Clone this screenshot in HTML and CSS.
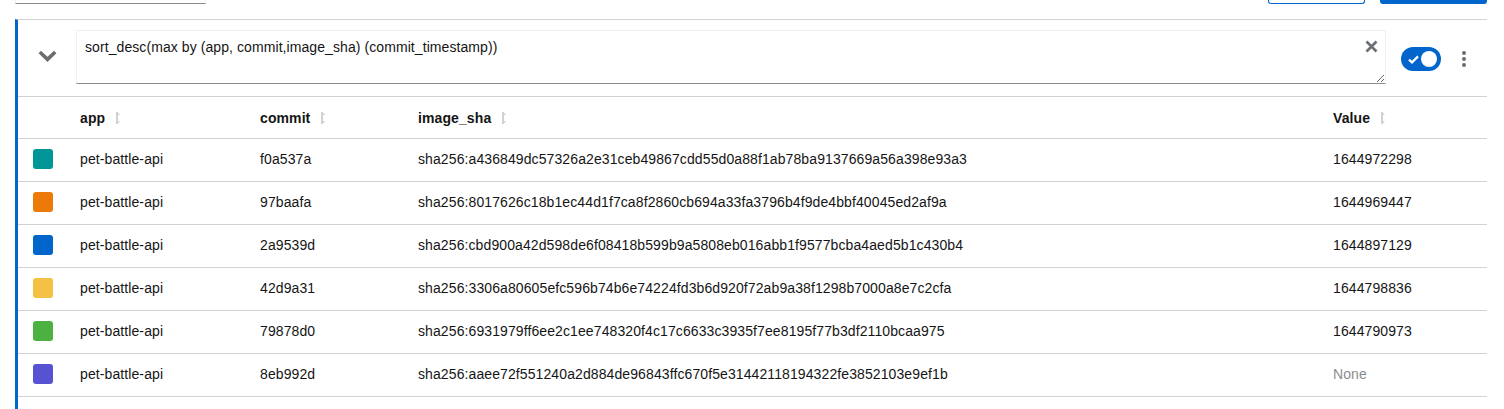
FILE: index.html
```html
<!DOCTYPE html>
<html>
<head>
<meta charset="utf-8">
<link rel="stylesheet" href="styles.css">
</head>
<body>
<div class="topbar">
  <div class="stub-input"></div>
  <div class="spacer"></div>
  <div class="btn-outline"></div>
  <div class="btn-primary"></div>
</div>
<div class="panel">
  <div class="query-row">
    <div class="chevron">
      <svg width="19" height="12" viewBox="0 0 19 12"><path d="M1.8 2 L9.5 9.4 L17.2 2" stroke="#6a6e73" stroke-width="3.6" fill="none" stroke-linejoin="miter"/></svg>
    </div>
    <div class="query-box">
      <textarea class="query-input" spellcheck="false">sort_desc(max by (app, commit,image_sha) (commit_timestamp))</textarea>
      <span class="clear">
        <svg width="13" height="13" viewBox="0 0 13 13"><path d="M1.5 1.5 L11.5 11.5 M11.5 1.5 L1.5 11.5" stroke="#6a6e73" stroke-width="2.6"/></svg>
      </span>
    </div>
    <div class="toggle">
      <svg class="check" width="11" height="9" viewBox="0 0 11 9"><path d="M1 4.6 L4 7.4 L10 1.4" stroke="#fff" stroke-width="2.2" fill="none"/></svg>
      <span class="knob"></span>
    </div>
    <div class="kebab"><span></span><span></span><span></span></div>
  </div>
  <div class="results">
    <div class="row head">
      <div></div>
      <div>app <span class="sort"></span></div>
      <div>commit <span class="sort"></span></div>
      <div>image_sha <span class="sort"></span></div>
      <div>Value <span class="sort"></span></div>
    </div>
    <div class="row"><div><span class="swatch teal"></span></div><div>pet-battle-api</div><div>f0a537a</div><div>sha256:a436849dc57326a2e31ceb49867cdd55d0a88f1ab78ba9137669a56a398e93a3</div><div>1644972298</div></div>
    <div class="row"><div><span class="swatch orange"></span></div><div>pet-battle-api</div><div>97baafa</div><div>sha256:8017626c18b1ec44d1f7ca8f2860cb694a33fa3796b4f9de4bbf40045ed2af9a</div><div>1644969447</div></div>
    <div class="row"><div><span class="swatch blue"></span></div><div>pet-battle-api</div><div>2a9539d</div><div>sha256:cbd900a42d598de6f08418b599b9a5808eb016abb1f9577bcba4aed5b1c430b4</div><div>1644897129</div></div>
    <div class="row"><div><span class="swatch yellow"></span></div><div>pet-battle-api</div><div>42d9a31</div><div>sha256:3306a80605efc596b74b6e74224fd3b6d920f72ab9a38f1298b7000a8e7c2cfa</div><div>1644798836</div></div>
    <div class="row"><div><span class="swatch green"></span></div><div>pet-battle-api</div><div>79878d0</div><div>sha256:6931979ff6ee2c1ee748320f4c17c6633c3935f7ee8195f77b3df2110bcaa975</div><div>1644790973</div></div>
    <div class="row"><div><span class="swatch purple"></span></div><div>pet-battle-api</div><div>8eb992d</div><div>sha256:aaee72f551240a2d884de96843ffc670f5e31442118194322fe3852103e9ef1b</div><div class="none">None</div></div>
  </div>
</div>
</body>
</html>
```

FILE: styles.css
```css
* { box-sizing: border-box; }
html, body { margin: 0; padding: 0; background: #fff; }
body {
  font-family: "Liberation Sans", Arial, sans-serif;
  font-size: 14px;
  color: #151515;
  width: 1504px;
  height: 409px;
  overflow: hidden;
}
.topbar {
  display: flex;
  align-items: flex-end;
  height: 19px;
  padding-left: 15px;
  padding-right: 17px;
}
.stub-input {
  align-self: flex-start;
  width: 191px;
  height: 4px;
  border: 1px solid #f0f0f0;
  border-top: none;
  border-bottom: 1px solid #8a8d90;
}
.spacer { flex: 1; }
.btn-outline {
  align-self: flex-start;
  width: 97px;
  height: 4px;
  border: 1px solid #06c;
  border-top: none;
  border-radius: 0 0 3px 3px;
  margin-right: 15px;
}
.btn-primary {
  align-self: flex-start;
  width: 107px;
  height: 4px;
  background: #06c;
  border-radius: 0 0 3px 3px;
}
.panel {
  margin-left: 15px;
  width: 1472px;
  border-left: 3px solid #06c;
  border-top: 1px solid #d2d2d2;
  height: 400px;
}
.query-row {
  display: flex;
  align-items: center;
  height: 77px;
  border-bottom: 1px solid #d2d2d2;
  padding-top: 1px;
}
.chevron {
  width: 58px;
  display: flex;
  justify-content: center;
  margin-top: -5px;
}
.query-box {
  position: relative;
  width: 1310px;
  height: 54px;
  margin-top: -4px;
}
.query-input {
  display: block;
  width: 100%;
  height: 54px;
  margin: 0;
  resize: vertical;
  border: 1px solid #f0f0f0;
  border-bottom-color: #8a8d90;
  padding: 6px 40px 6px 8px;
  font-family: "Liberation Sans", Arial, sans-serif;
  font-size: 14px;
  letter-spacing: 0.08px;
  line-height: 21px;
  color: #151515;
  outline: none;
}
.clear {
  position: absolute;
  right: 8px;
  top: 10px;
  width: 13px;
  height: 13px;
  display: flex;
}
.toggle {
  position: relative;
  width: 40px;
  height: 24px;
  border-radius: 12px;
  background: #06c;
  margin-left: 15px;
  display: flex;
  align-items: center;
}
.check { position: absolute; left: 7px; top: 8px; }
.knob {
  position: absolute;
  right: 4px;
  top: 4px;
  width: 16px;
  height: 16px;
  border-radius: 50%;
  background: #fff;
}
.kebab {
  margin-left: 21px;
  display: flex;
  flex-direction: column;
  gap: 2px;
}
.kebab span {
  width: 4px;
  height: 4px;
  border-radius: 50%;
  background: #6a6e73;
}
.results {
  width: 1469px;
  letter-spacing: 0.1px;
}
.row {
  display: grid;
  grid-template-columns: 62px 180px 158px 915px 1fr;
  align-items: center;
  height: 43px;
  padding-bottom: 2px;
  border-bottom: 1px solid #d2d2d2;
  white-space: nowrap;
}
.row > div:first-child { padding-left: 15px; }
.row.head {
  height: 42px;
  padding-bottom: 0;
  padding-top: 1px;
  font-weight: 700;
}
.swatch {
  display: block;
  width: 20px;
  height: 20px;
  border-radius: 3px;
}
.teal { background: #009596; }
.orange { background: #ec7a08; }
.blue { background: #06c; }
.yellow { background: #f4c145; }
.green { background: #4cb140; }
.purple { background: #5752d1; }
.none { color: #8a8d90; }
.sort {
  display: inline-block;
  position: relative;
  width: 7px;
  height: 14px;
  margin-left: 4px;
  vertical-align: -2px;
}
.sort::before {
  content: "";
  position: absolute;
  left: 2.5px;
  top: 1px;
  width: 2px;
  height: 12px;
  background: #d2d2d2;
}
.sort::after {
  content: "";
  position: absolute;
  left: 0;
  top: 0;
  width: 7px;
  height: 14px;
  background:
    linear-gradient(#d2d2d2, #d2d2d2) 0 2px / 7px 2px no-repeat,
    linear-gradient(#d2d2d2, #d2d2d2) 0 10px / 7px 2px no-repeat;
  clip-path: polygon(50% 0, 100% 30%, 0 30%, 0 70%, 100% 70%, 50% 100%);
}
```
